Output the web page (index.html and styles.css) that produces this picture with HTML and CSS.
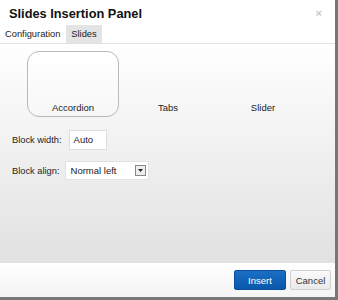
FILE: index.html
```html
<!DOCTYPE html>
<html lang="en">

<head>
    <meta charset="UTF-8">
    <title>Slides Insertion Panel</title>
    <link rel="stylesheet" href="styles.css">
</head>

<body>
    <div class="panel">
        <div class="head">
            <span class="title">Slides Insertion Panel</span>
            <span class="close">&times;</span>
        </div>
        <div class="tabs">
            <span class="tab active">Configuration</span>
            <span class="tab">Slides</span>
        </div>
        <div class="content">
            <div class="types">
                <div class="type selected">Accordion</div>
                <div class="type">Tabs</div>
                <div class="type">Slider</div>
            </div>
            <div class="row">
                <label class="width-label">Block width:</label>
                <div class="field">Auto</div>
            </div>
            <div class="row">
                <label class="align-label">Block align:</label>
                <div class="select">
                    <span>Normal left</span>
                    <span class="arrow"><svg width="5" height="3" viewBox="0 0 5 3"><path d="M0 0h5L2.5 3z" fill="#222"/></svg></span>
                </div>
            </div>
        </div>
        <div class="foot">
            <button class="btn insert">Insert</button>
            <button class="btn">Cancel</button>
        </div>
    </div>
</body>

</html>
```

FILE: styles.css
```css
html,
body {
    margin: 0;
    height: 100%;
}

body {
    font-family: "Liberation Sans", Arial, sans-serif;
    font-size: 9.3px;
    color: #222;
    background: #777;
}

.panel {
    width: 335px;
    height: 297px;
    background: #fff;
    display: flex;
    flex-direction: column;
}

.head {
    height: 25px;
    display: flex;
    align-items: center;
    justify-content: space-between;
    padding: 0 13px 0 9px;
}

.title {
    font-size: 12.8px;
    font-weight: bold;
    color: #111;
    margin-top: 1px;
}

.close {
    font-size: 11px;
    color: #c8c8c8;
    font-weight: bold;
}

.tabs {
    display: flex;
    height: 18px;
    border-bottom: 1px solid #e2e2e2;
}

.tab {
    padding: 0 5px 0 5px;
    line-height: 19px;
    background: #e4e4e4;
    color: #222;
}

.tab.active {
    background: #fff;
    margin-right: 1px;
}

.content {
    flex: 1;
    background: linear-gradient(#fff, #f3f3f3 40%, #e1e1e1);
    padding: 7px 0 0 12px;
}

.types {
    display: flex;
    margin-left: 15px;
    gap: 3px;
}

.type {
    width: 92px;
    height: 66px;
    box-sizing: border-box;
    display: flex;
    align-items: flex-end;
    justify-content: center;
    padding-bottom: 3px;
    border: 1px solid transparent;
    border-radius: 12px;
    font-size: 9.5px;
}

.type.selected {
    border-color: #b9b9b9;
    background: linear-gradient(#fff, #f7f7f7);
}

.row {
    display: flex;
    align-items: center;
    margin-top: 13px;
}

.row + .row {
    margin-top: 11px;
}

label {
    white-space: nowrap;
}

.width-label {
    margin-right: 7px;
}

.align-label {
    margin-right: 5px;
}

.field {
    width: 38px;
    height: 20px;
    box-sizing: border-box;
    border: 1px solid #ddd;
    background: #fff;
    line-height: 18px;
    padding-left: 4px;
    font-size: 9.5px;
}

.select {
    width: 84px;
    height: 19px;
    box-sizing: border-box;
    border: 1px solid #e2e2e2;
    background: #fff;
    display: flex;
    align-items: center;
    justify-content: space-between;
    padding: 0 2px 0 5px;
    font-size: 9.5px;
}

.arrow {
    width: 9px;
    height: 9px;
    border: 1px solid #888;
    background: #eee;
    display: flex;
    align-items: center;
    justify-content: center;
}

.foot {
    height: 34px;
    background: linear-gradient(#fff, #f4f4f4);
    display: flex;
    align-items: center;
    justify-content: flex-end;
    gap: 4px;
    padding-right: 4px;
}

.btn {
    font: 9.5px "Liberation Sans", Arial, sans-serif;
    height: 20px;
    width: 41px;
    padding: 0;
    border: 1px solid #d0d0d0;
    border-radius: 2px;
    background: linear-gradient(#fafafa, #eaeaea);
    color: #333;
}

.btn.insert {
    width: 52px;
    background: linear-gradient(#1a6fc5, #0a58ac);
    border-color: #0a4f9a;
    color: #fff;
}
```
